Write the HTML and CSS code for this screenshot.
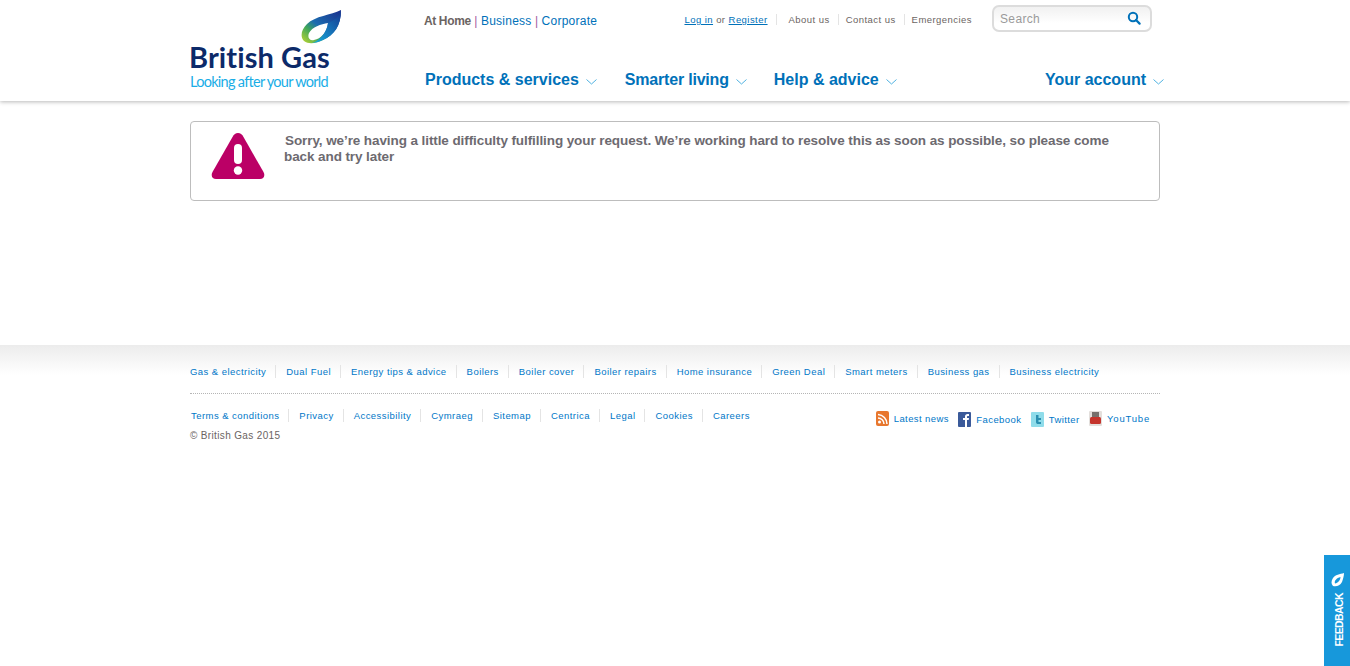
FILE: index.html
```html
<!DOCTYPE html>
<html lang="en">
<head>
<meta charset="utf-8">
<title>British Gas</title>
<link rel="stylesheet" href="styles.css">
</head>
<body>
<header class="site-header">
  <div class="wrap header-inner">
    <a class="logo" href="#">
      <svg class="logo-flame" width="41" height="34" viewBox="0 0 41 34">
        <defs>
          <linearGradient id="fl" x1="0" y1="1" x2="1" y2="0">
            <stop offset="0" stop-color="#c3d92f"/>
            <stop offset=".3" stop-color="#3fa65a"/>
            <stop offset=".48" stop-color="#1b6cb0"/>
            <stop offset="1" stop-color="#1a2f8c"/>
          </linearGradient>
          <linearGradient id="fr" x1="0" y1="1" x2="1" y2="0">
            <stop offset="0" stop-color="#17b0e0"/>
            <stop offset="1" stop-color="#15358f"/>
          </linearGradient>
        </defs>
        <path fill="url(#fl)" fill-rule="evenodd" d="M40 0C30 5 14 6 6 14C0 20 -1 27 3 31C8 35 16 33 22 30C33 25 40 16 40 0ZM27 13C20 14 11 17 8 23C6 28 9 31 13 30C20 29 26 22 27 13Z"/>
        <path fill="url(#fr)" d="M40 0C40 16 33 25 22 30C18 32 14 33 11 33C18 31 26 23 27 13C33 11 38 7 40 0Z"/>
      </svg>
      <span class="logo-name">British Gas</span>
      <span class="logo-tag">Looking after your world</span>
    </a>
    <div class="header-main">
      <div class="top-row">
        <div class="sectors"><strong>At Home</strong> <i>|</i> <a href="#">Business</a> <i>|</i> <a href="#">Corporate</a></div>
        <div class="utility">
          <div class="util-links">
            <span class="login"><a href="#">Log in</a> or <a href="#">Register</a></span>
            <a class="util" href="#">About us</a>
            <a class="util" href="#">Contact us</a>
            <a class="util" href="#">Emergencies</a>
          </div>
          <div class="search">
            <span class="search-text">Search</span>
            <svg width="14" height="14" viewBox="0 0 14 14"><circle cx="6" cy="6" r="4.2" fill="none" stroke="#0071b9" stroke-width="2"/><path d="M9 9l3.6 3.6" stroke="#0071b9" stroke-width="2.2" stroke-linecap="round"/></svg>
          </div>
        </div>
      </div>
      <nav class="main-nav">
        <div class="nav-left">
          <a href="#">Products &amp; services<svg class="chev" width="11" height="6" viewBox="0 0 11 6"><path d="M.5.5L5.500 5 10.500.5" fill="none" stroke="#4fb2e2"/></svg></a>
          <a href="#">Smarter living<svg class="chev" width="11" height="6" viewBox="0 0 11 6"><path d="M.5.5L5.500 5 10.500.5" fill="none" stroke="#4fb2e2"/></svg></a>
          <a href="#">Help &amp; advice<svg class="chev" width="11" height="6" viewBox="0 0 11 6"><path d="M.5.5L5.500 5 10.500.5" fill="none" stroke="#4fb2e2"/></svg></a>
        </div>
        <a href="#">Your account<svg class="chev" width="11" height="6" viewBox="0 0 11 6"><path d="M.5.5L5.500 5 10.500.5" fill="none" stroke="#4fb2e2"/></svg></a>
      </nav>
    </div>
  </div>
</header>

<main class="wrap content">
  <section class="alert">
    <svg class="alert-icon" width="54" height="48" viewBox="0 0 54 48">
      <path fill="#bb0066" d="M27 1C24.500 1 23 2.500 21.500 5L1.500 40C-.5 44 1.500 47 5 47H49C52.500 47 54.500 44 52.500 40L32.500 5C31 2.500 29.500 1 27 1Z"/>
      <rect x="23" y="12" width="8" height="20" rx="4" fill="#fff"/>
      <circle cx="27" cy="38.500" r="4.200" fill="#fff"/>
    </svg>
    <p>Sorry, we’re having a little difficulty fulfilling your request. We’re working hard to resolve this as soon as possible, so please come back and try later</p>
  </section>
</main>

<footer class="site-footer">
  <div class="wrap">
    <ul class="foot-links primary">
      <li><a href="#">Gas &amp; electricity</a></li>
      <li><a href="#">Dual Fuel</a></li>
      <li><a href="#">Energy tips &amp; advice</a></li>
      <li><a href="#">Boilers</a></li>
      <li><a href="#">Boiler cover</a></li>
      <li><a href="#">Boiler repairs</a></li>
      <li><a href="#">Home insurance</a></li>
      <li><a href="#">Green Deal</a></li>
      <li><a href="#">Smart meters</a></li>
      <li><a href="#">Business gas</a></li>
      <li><a href="#">Business electricity</a></li>
    </ul>
    <div class="foot-bottom">
      <div>
        <ul class="foot-links secondary">
          <li><a href="#">Terms &amp; conditions</a></li>
          <li><a href="#">Privacy</a></li>
          <li><a href="#">Accessibility</a></li>
          <li><a href="#">Cymraeg</a></li>
          <li><a href="#">Sitemap</a></li>
          <li><a href="#">Centrica</a></li>
          <li><a href="#">Legal</a></li>
          <li><a href="#">Cookies</a></li>
          <li><a href="#">Careers</a></li>
        </ul>
        <p class="copyright">© British Gas 2015</p>
      </div>
      <div class="social">
        <a href="#"><svg width="13" height="15" viewBox="0 0 13 15"><rect width="13" height="15" rx="2" fill="#e8772e"/><circle cx="3.500" cy="11" r="1.500" fill="#fff"/><path d="M2 7a6 6 0 0 1 6 6M2 3.500a9.500 9.500 0 0 1 9 9.500" fill="none" stroke="#fff" stroke-width="1.500"/></svg>Latest news</a>
        <a href="#" class="low"><svg width="13" height="15" viewBox="0 0 13 15"><rect width="13" height="15" rx="1" fill="#3b5a9a"/><path d="M7 15V8H5V6h2V4.500C7 3 8 2 9.500 2H11v2H10c-.7 0-1 .3-1 1v1h2l-.3 2H9v7z" fill="#fff"/></svg>Facebook</a>
        <a href="#" class="low"><svg width="13" height="15" viewBox="0 0 13 15"><rect width="13" height="15" rx="1" fill="#8fdcea"/><path d="M5 3v7c0 1.500 1 2 2 2h3v-2H7.500V8H10V6H7.500V3z" fill="#2a8fb0"/></svg>Twitter</a>
        <a href="#" class="wide"><svg width="13" height="15" viewBox="0 0 13 15"><rect width="13" height="15" rx="1" fill="#e3dfdc"/><rect x="3" y="1" width="7" height="5" fill="#77706c"/><rect x="1" y="6" width="11" height="7" rx="1.500" fill="#c5342c"/></svg>YouTube</a>
      </div>
    </div>
  </div>
</footer>

<a class="feedback" href="#">
  <span>FEEDBACK</span>
  <svg width="13" height="14" viewBox="0 0 13 14"><path d="M13 0C9 1 4 2 2 5C0 8 0 11 2 13C5 14 9 13 11 9C12 6 13 3 13 0ZM9.500 4C9.500 7 7 10 4 10.500C3 8 5.500 5 9.500 4Z" fill="#fff" fill-rule="evenodd"/></svg>
</a>
</body>
</html>
```

FILE: styles.css
```css
* { box-sizing: border-box; }
html, body { margin: 0; padding: 0; }
body { font-family: "Liberation Sans", Arial, sans-serif; color: #6b6462; background: #fff; height: 666px; overflow: hidden; }
a { color: #0071b9; text-decoration: none; }
ul { list-style: none; margin: 0; padding: 0; }
p { margin: 0; }
.wrap { width: 970px; margin: 0 auto; }

.site-header { height: 101px; background: #fff; box-shadow: 0 1px 4px rgba(0,0,0,.28); position: relative; }
.header-inner { display: flex; height: 101px; }
.logo { width: 234px; flex: none; display: flex; flex-direction: column; padding-top: 10px; }
.logo-flame { align-self: flex-start; margin-left: 111px; display: block; }
.logo-name { font-family: Lato, sans-serif; font-weight: 700; font-size: 29px; line-height: 26px; letter-spacing: .1px; color: #0c2a69; white-space: nowrap; margin-left: -1px; }
.logo-tag { font-family: Lato, sans-serif; font-size: 14.500px; line-height: 16px; letter-spacing: -.72px; color: #19ade6; white-space: nowrap; margin-top: 4px; }

.header-main { width: 736px; flex: none; display: flex; flex-direction: column; }
.top-row { display: flex; justify-content: space-between; height: 59px; }
.sectors { font-size: 12px; line-height: 14px; padding-top: 14px; color: #a25aa0; letter-spacing: .25px; word-spacing: -.3px; }
.sectors strong { color: #6b6462; letter-spacing: -.3px; }
.sectors i { font-style: normal; }
.utility { display: flex; align-items: flex-start; margin-right: 8px; }
.util-links { display: flex; font-size: 9.500px; line-height: 12px; padding-top: 14px; color: #6b6462; letter-spacing: .45px; }
.login a { text-decoration: underline; }
.login { padding-right: 8px; border-right: 1px solid #e4e4e4; margin-right: 12px; height: 11px; }
a.util { color: #6b6462; padding-right: 8px; margin-right: 7px; border-right: 1px solid #e4e4e4; height: 11px; }
a.util:last-child { border: 0; margin-right: 0; padding-right: 0; }
.search { width: 160px; height: 27px; margin: 5px 0 0 20px; border: 2px solid #dcdcdc; border-radius: 7px; background: linear-gradient(#f1f1f1, #fff 70%); display: flex; justify-content: space-between; align-items: center; padding: 0 9px 0 6px; }
.search-text { font-size: 12px; color: #9a9a9a; letter-spacing: .35px; }
.search svg { margin-top: -2px; }

.main-nav { display: flex; justify-content: space-between; font-size: 16px; font-weight: 700; line-height: 20px; padding-left: 1px; width: 740px; margin-top: 11px; }
.nav-left { display: flex; gap: 28px; }
.nav-left a:nth-child(2) { letter-spacing: -.2px; margin-right: -1px; }
.chev { margin-left: 7px; vertical-align: 0; }

.content { height: 244px; padding-top: 20px; }
.alert { height: 80px; border: 1px solid #bdbdbd; border-radius: 4px; display: flex; padding: 10px 40px 0 20px; }
.alert-icon { flex: none; }
.alert p { font-size: 13.500px; font-weight: 700; line-height: 16px; letter-spacing: -.09px; color: #6d6a70; margin: 1px 0 0 19px; text-indent: 1px; }

.site-footer { background: linear-gradient(#ececec, #fff 30px); padding-top: 20px; font-size: 9.500px; }
.foot-links { display: flex; letter-spacing: .45px; }
.foot-links li { line-height: 13px; padding-right: 9px; margin-right: 10px; border-right: 1px solid #e4e4e4; }
.foot-links li:last-child { border: 0; padding: 0; margin: 0; }
.foot-links a { color: #0077c8; }
.primary { padding-bottom: 15px; border-bottom: 1px dotted #b5b5b5; }
.secondary { padding-left: 1px; }
.foot-bottom { display: flex; justify-content: space-between; padding-top: 15px; }
.copyright { font-size: 10px; letter-spacing: .35px; color: #6b6462; line-height: 12px; margin-top: 8px; }
.social { display: flex; gap: 9.500px; padding: 2px 10px 0 0; letter-spacing: .4px; }
.social a { display: flex; gap: 5px; align-items: center; height: 15px; color: #0077c8; }
.social a.low { margin-top: 1px; }
.social a.wide { letter-spacing: .8px; }
.social svg { flex: none; }

.feedback { position: fixed; right: 0; bottom: 0; width: 26px; height: 111px; background: #1798db; color: #fff; display: flex; flex-direction: column-reverse; align-items: center; justify-content: flex-end; padding: 18px 0 0; gap: 6px; }
.feedback span { writing-mode: vertical-rl; transform: rotate(180deg); font-size: 10.500px; font-weight: 700; line-height: 14px; letter-spacing: -.6px; margin-left: 3px; }
```
